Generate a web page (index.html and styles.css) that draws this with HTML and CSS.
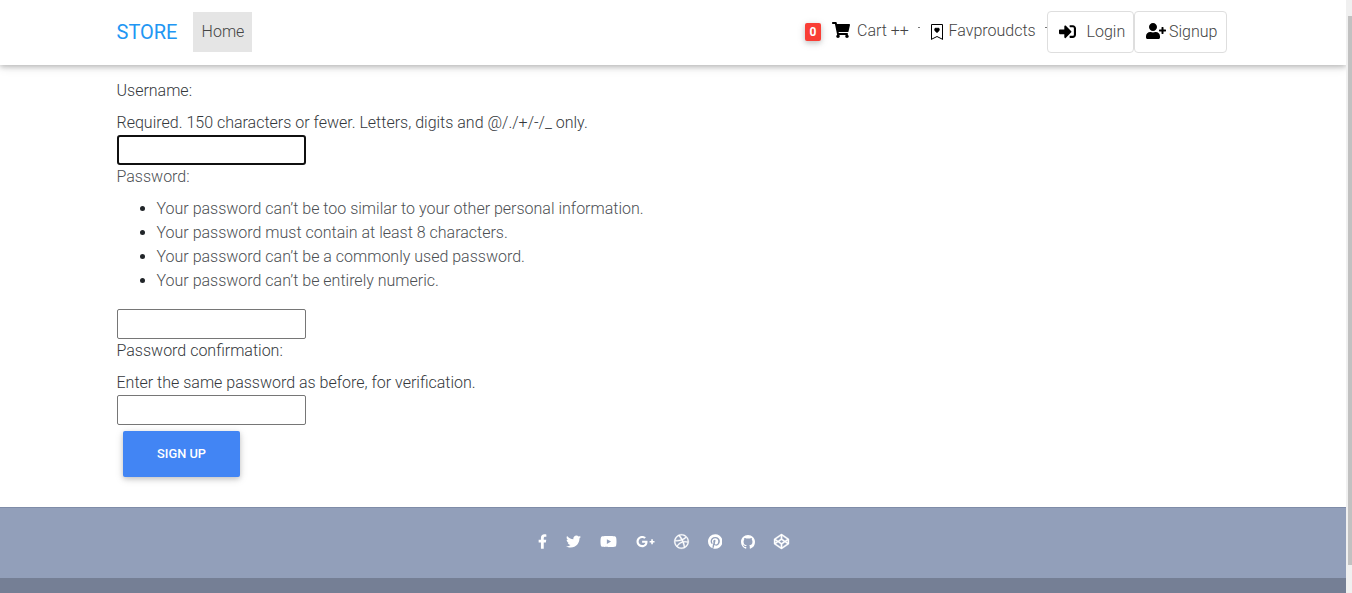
FILE: index.html
```html
<!DOCTYPE html>
<html lang="en">
<head>
<meta charset="utf-8">
<title>Store - Sign up</title>
<link rel="stylesheet" href="styles.css">
</head>
<body>
<div class="window">
<div class="page">
  <nav class="navbar">
    <a class="brand">STORE</a>
    <a class="home">Home</a>
    <div class="nav-right">
      <span class="badge">0</span>
      <svg class="cart" viewBox="0 0 576 512"><path d="M528.12 301.319l47.273-208C578.806 78.301 567.391 64 551.99 64H159.208l-9.166-44.81C147.758 8.021 137.93 0 126.529 0H24C10.745 0 0 10.745 0 24v16c0 13.255 10.745 24 24 24h69.883l70.248 343.435C147.325 417.1 136 435.222 136 456c0 30.928 25.072 56 56 56s56-25.072 56-56c0-15.674-6.447-29.835-16.824-40h209.647C430.447 426.165 424 440.326 424 456c0 30.928 25.072 56 56 56s56-25.072 56-56c0-22.172-12.888-41.332-31.579-50.405l5.517-24.276c3.413-15.018-8.002-29.319-23.403-29.319H218.117l-6.545-32h293.145c11.206 0 20.92-7.754 23.403-18.681z"/></svg>
      <a class="link cart-link">Cart ++</a>
      <i class="tick"></i>
      <svg class="bookmark" viewBox="0 0 16 16"><path fill-rule="evenodd" d="M2 1a1 1 0 0 1 1-1h10a1 1 0 0 1 1 1v15l-6-3-6 3zM3 1v13.4l5-2.5 5 2.5V1z"/><path class="heart" d="M8 4.41c1.387-1.425 4.854 1.07 0 4.277C3.146 5.48 6.613 2.986 8 4.412z"/></svg>
      <a class="link fav-link">Favproudcts</a>
      <i class="tick"></i>
      <a class="outlined login"><svg class="signin" viewBox="0 0 512 512"><path d="M416 448h-84c-6.6 0-12-5.4-12-12v-40c0-6.6 5.4-12 12-12h84c17.7 0 32-14.3 32-32V160c0-17.7-14.3-32-32-32h-84c-6.6 0-12-5.4-12-12V76c0-6.6 5.4-12 12-12h84c53 0 96 43 96 96v192c0 53-43 96-96 96zm-47-201L201 79c-15-15-41-4.5-41 17v96H24c-13.3 0-24 10.7-24 24v96c0 13.3 10.7 24 24 24h136v96c0 21.5 26 32 41 17l168-168c9.3-9.4 9.3-24.6 0-34z"/></svg><span>Login</span></a>
      <a class="outlined signup"><svg class="adduser" viewBox="0 0 640 512"><path d="M624 208h-64v-64c0-8.800-7.200-16-16-16h-32c-8.800 0-16 7.200-16 16v64h-64c-8.800 0-16 7.200-16 16v32c0 8.800 7.200 16 16 16h64v64c0 8.800 7.200 16 16 16h32c8.800 0 16-7.200 16-16v-64h64c8.800 0 16-7.200 16-16v-32c0-8.800-7.200-16-16-16zm-400 48c70.700 0 128-57.300 128-128S294.700 0 224 0 96 57.300 96 128s57.300 128 128 128zm89.600 32h-16.700c-22.200 10.200-46.900 16-72.900 16s-50.600-5.800-72.900-16h-16.700C60.200 288 0 348.200 0 422.400V464c0 26.500 21.500 48 48 48h352c26.500 0 48-21.500 48-48v-41.600c0-74.200-60.200-134.400-134.400-134.400z"/></svg><span>Signup</span></a>
    </div>
  </nav>

  <form class="form">
    <label class="label">Username:</label>
    <div class="help">Required. 150 characters or fewer. Letters, digits and @/./+/-/_ only.</div>
    <input class="field focused" type="text">
    <label class="label soft">Password:</label>
    <ul class="rules">
      <li>Your password can’t be too similar to your other personal information.</li>
      <li>Your password must contain at least 8 characters.</li>
      <li>Your password can’t be a commonly used password.</li>
      <li>Your password can’t be entirely numeric.</li>
    </ul>
    <input class="field" type="password">
    <label class="label">Password confirmation:</label>
    <div class="help">Enter the same password as before, for verification.</div>
    <input class="field" type="password">
    <button class="submit" type="button">SIGN UP</button>
  </form>

  <footer class="footer">
    <div class="social">
      <svg class="s-fb" viewBox="0 0 320 512"><path d="M279.14 288l14.22-92.66h-88.91v-60.13c0-25.35 12.42-50.06 52.24-50.06h40.42V6.26S260.43 0 225.36 0c-73.22 0-121.08 44.38-121.08 124.72v70.62H22.89V288h81.39v224h100.17V288z"/></svg>
      <svg class="s-std" viewBox="0 0 512 512"><path d="M459.37 151.716c.325 4.548.325 9.097.325 13.645 0 138.72-105.583 298.558-298.558 298.558-59.452 0-114.68-17.219-161.137-47.106 8.447.974 16.568 1.299 25.34 1.299 49.055 0 94.213-16.568 130.274-44.832-46.132-.975-84.792-31.188-98.112-72.772 6.498.974 12.995 1.624 19.818 1.624 9.421 0 18.843-1.3 27.614-3.573-48.081-9.747-84.143-51.98-84.143-102.985v-1.299c13.969 7.797 30.214 12.67 47.431 13.319-28.264-18.843-46.781-51.005-46.781-87.391 0-19.492 5.197-37.36 14.294-52.954 51.655 63.675 129.3 105.258 216.365 109.807-1.624-7.797-2.599-15.918-2.599-24.04 0-57.828 46.782-104.934 104.934-104.934 30.213 0 57.502 12.67 76.67 33.137 23.715-4.548 46.456-13.32 66.599-25.34-7.798 24.366-24.366 44.833-46.132 57.827 21.117-2.273 41.584-8.122 60.426-16.243-14.292 20.791-32.161 39.308-52.628 54.253z"/></svg>
      <svg class="s-yt" viewBox="0 0 576 512"><path d="M549.655 124.083c-6.281-23.65-24.787-42.276-48.284-48.597C458.781 64 288 64 288 64S117.22 64 74.629 75.486c-23.497 6.322-42.003 24.947-48.284 48.597-11.412 42.867-11.412 132.305-11.412 132.305s0 89.438 11.412 132.305c6.281 23.65 24.787 41.5 48.284 47.821C117.22 448 288 448 288 448s170.78 0 213.371-11.486c23.497-6.321 42.003-24.171 48.284-47.821 11.412-42.867 11.412-132.305 11.412-132.305s0-89.438-11.412-132.305zm-317.51 213.508V175.185l142.739 81.205-142.739 81.201z"/></svg>
      <svg class="s-gp" viewBox="0 0 640 512"><path d="M386.061 228.496c1.834 9.692 3.143 19.384 3.143 31.956C389.204 370.205 315.599 448 204.8 448c-106.084 0-192-85.915-192-192s85.916-192 192-192c51.864 0 95.083 18.859 128.611 50.292l-52.126 50.03c-14.145-13.621-39.028-29.599-76.485-29.599-65.484 0-118.92 54.221-118.92 121.277 0 67.056 53.436 121.277 118.92 121.277 75.961 0 104.513-54.745 108.965-82.773H204.8v-66.009h181.261zm185.406 6.437V179.2h-56.001v55.733h-55.733v56.001h55.733v55.733h56.001v-55.733H627.2v-56.001h-55.733z"/></svg>
      <svg class="s-std bold" viewBox="0 0 512 512"><path d="M256 8C119.252 8 8 119.252 8 256s111.252 248 248 248 248-111.252 248-248S392.748 8 256 8zm163.97 114.366c29.503 36.046 47.369 81.957 47.835 131.955-6.984-1.477-77.018-15.682-147.502-6.818-5.752-14.041-11.181-26.393-18.617-41.614 78.321-31.977 113.818-77.482 118.284-83.523zM396.421 97.87c-3.81 5.427-35.697 48.286-111.021 76.519-34.712-63.776-73.185-116.168-79.04-124.008 67.176-16.193 137.966 1.27 190.061 47.489zm-230.48-33.25c5.585 7.659 43.438 60.116 78.537 122.509-99.087 26.313-186.36 25.934-195.834 25.809C62.38 147.205 106.678 92.573 165.941 64.62zM44.17 256.323c0-2.166.043-4.322.108-6.473 9.268.19 111.92 1.513 217.706-30.146 6.064 11.868 11.857 23.915 17.174 35.949-76.599 21.575-146.194 83.527-180.531 142.306C64.794 360.405 44.17 310.73 44.17 256.323zm81.807 167.113c22.127-45.233 82.178-103.622 167.579-132.756 29.74 77.283 42.039 142.053 45.189 160.638-68.112 29.013-150.015 21.053-212.768-27.882zm248.38 8.489c-2.171-12.886-13.446-74.897-41.152-151.033 66.38-10.626 124.7 6.768 131.947 9.055-9.442 58.941-43.273 109.844-90.795 141.978z"/></svg>
      <svg class="s-pin" viewBox="0 0 496 512"><path d="M496 256c0 137-111 248-248 248-25.6 0-50.2-3.9-73.4-11.1 10.1-16.5 25.2-43.5 30.8-65 3-11.6 15.4-59 15.4-59 8.1 15.4 31.7 28.5 56.8 28.5 74.8 0 128.7-68.8 128.7-154.3 0-81.9-66.9-143.2-152.9-143.2-107 0-163.9 71.8-163.9 150.1 0 36.4 19.4 81.7 50.3 96.1 4.7 2.2 7.2 1.2 8.3-3.3.8-3.4 5-20.3 6.9-28.1.6-2.5.3-4.7-1.7-7.1-10.1-12.5-18.3-35.3-18.3-56.6 0-54.7 41.4-107.6 112-107.6 60.9 0 103.6 41.5 103.6 100.9 0 67.1-33.9 113.6-78 113.6-24.3 0-42.6-20.1-36.7-44.8 7-29.5 20.5-61.3 20.5-82.6 0-19-10.2-34.9-31.4-34.9-24.9 0-44.9 25.7-44.9 60.2 0 22 7.4 36.8 7.4 36.8s-24.5 103.800-29 123.200c-5 21.400-3 51.600-.9 71.200C65.400 450.900 0 361.100 0 256 0 119 111 8 248 8s248 111 248 248z"/></svg>
      <svg class="s-git" viewBox="0 0 16 16"><path d="M8 0C3.58 0 0 3.58 0 8c0 3.54 2.29 6.53 5.47 7.59.4.07.55-.17.55-.38 0-.19-.01-.82-.01-1.49-2.01.37-2.53-.49-2.69-.94-.09-.23-.48-.94-.82-1.13-.28-.15-.68-.52-.01-.53.63-.01 1.08.58 1.23.82.72 1.21 1.87.87 2.33.66.07-.52.28-.87.51-1.07-1.78-.2-3.64-.89-3.64-3.95 0-.87.31-1.59.82-2.15-.08-.2-.36-1.02.08-2.12 0 0 .67-.21 2.2.82.64-.18 1.32-.27 2-.27s1.36.09 2 .27c1.53-1.04 2.2-.82 2.2-.82.44 1.1.16 1.92.08 2.12.51.56.82 1.27.82 2.15 0 3.07-1.87 3.75-3.65 3.95.29.25.54.73.54 1.48 0 1.07-.01 1.93-.01 2.2 0 .21.15.46.55.38A8.01 8.01 0 0016 8c0-4.42-3.58-8-8-8z"/></svg>
      <svg class="s-std bold" viewBox="0 0 512 512"><path d="M502.285 159.704l-234-156c-7.987-4.915-16.568-4.945-24.571 0l-234 156C3.714 163.703 0 170.847 0 177.989v155.999c0 7.143 3.714 14.286 9.715 18.286l234 156.022c7.987 4.915 16.568 4.945 24.571 0l234-156.022c6-3.999 9.715-11.143 9.715-18.286V177.989c-.001-7.142-3.715-14.286-9.716-18.285zM278 63.131l172.286 114.858-76.857 51.429L278 165.703V63.131zm-44 0v102.572l-95.429 63.715-76.857-51.429L234 63.131zM44 219.132l55.143 36.857L44 292.847v-73.715zm190 229.715L61.714 333.989l76.857-51.429L234 346.275v102.572zm22-140.858l-77.715-52 77.715-52 77.715 52-77.715 52zm22 140.858V346.275l95.429-63.715 76.857 51.429L278 448.847zm190-156l-55.143-36.857L468 219.132v73.715z"/></svg>
    </div>
    <div class="copyright"></div>
  </footer>
</div>
<div class="scrollbar"><div class="thumb"></div></div>
</div>
</body>
</html>
```
FILE: styles.css
```css
* { box-sizing: border-box; }
body {
  margin: 0;
  overflow: hidden;
  background: #fff;
  color: #34383c;
  font: 300 16px/24px Roboto, "Liberation Sans", sans-serif;
}
.window { display: flex; height: 593px; }
.page { display: flex; flex-direction: column; width: 1346px; }
.scrollbar { width: 6px; padding: 16px 0 0 2px; background: #f0f0f0; }
.thumb { height: 549px; background: #c1c1c1; }

.navbar {
  display: flex;
  align-items: center;
  height: 65px;
  flex: none;
  padding: 0 119px 2px 116.5px;
  color: #444;
  box-shadow: 0 2px 5px rgba(0, 0, 0, .2), 0 2px 10px rgba(0, 0, 0, .12);
}
.brand { width: 76.5px; color: #2196f3; font-size: 20px; font-weight: 400; }
.home {
  height: 40px;
  width: 59px;
  padding-left: 1px;
  line-height: 40px;
  text-align: center;
  background: #e5e5e5;
}
.nav-right { display: flex; align-items: center; margin-left: auto; }
.badge {
  width: 16px;
  height: 18px;
  border-radius: 2px;
  background: #f93e35;
  color: #fff;
  font-size: 12px;
  font-weight: 700;
  line-height: 18px;
  text-align: center;
  box-shadow: 0 2px 5px rgba(0, 0, 0, .16), 0 2px 10px rgba(0, 0, 0, .12);
}
.cart { width: 18px; height: 16px; margin: 0 7px 3px 11px; }
.link { padding-bottom: 1px; white-space: nowrap; }
.cart-link { width: 61px; }
.fav-link { width: 96.5px; }
.tick { width: 2px; height: 1px; margin-bottom: 8px; background: #777; }
.bookmark { width: 16px; height: 16px; margin: 0 3.5px 0 9px; }
.heart { stroke: #000; stroke-width: .5; }
.outlined {
  display: flex;
  align-items: center;
  height: 42px;
  border: 1px solid #dedede;
  border-radius: 4px;
}
.login { width: 87px; padding-left: 11px; gap: 10.5px; }
.signup { width: 93px; padding-left: 11px; gap: 3px; }
.signin { width: 17px; height: 17px; }
.adduser { width: 20px; height: 16px; margin-bottom: 2px; }

.form {
  display: flex;
  flex-direction: column;
  align-items: flex-start;
  flex: none;
  height: 442px;
  padding: 14px 0 0 116.5px;
}
.label { margin-bottom: 8px; }
.soft { color: #4c4f53; }
.field {
  width: 189px;
  height: 30px;
  border: 1px solid #767676;
  border-radius: 2px;
  background: #fff;
}
.focused { border: 2px solid #101010; border-radius: 3px; outline: none; }
.rules { margin: 0 0 16px; padding-left: 40px; color: #4c4f53; }
.rules li::marker { color: #212529; }
.submit {
  width: 117px;
  height: 46px;
  margin: 6px;
  border: 0;
  border-radius: 2px;
  background: #4285f4;
  color: #fff;
  font: 500 12.8px/46px Roboto, "Liberation Sans", sans-serif;
  padding: 0 0 0 1px;
  box-shadow: 0 2px 5px rgba(0, 0, 0, .16), 0 2px 10px rgba(0, 0, 0, .12);
}

.footer { flex: 1; display: flex; flex-direction: column; background: #929fba; border-top: 1px solid #7f8ca8; }
.social {
  display: flex;
  align-items: center;
  flex: none;
  height: 70px;
  padding: 0 0 3px 538px;
  fill: #fff;
}
.s-fb { width: 9px; height: 15px; margin-right: 19px; }
.s-std { width: 15px; height: 15px; margin-right: 19px; }
.s-yt { width: 17px; height: 15px; margin-right: 19px; }
.s-gp { width: 19px; height: 15px; margin-right: 18.5px; }
.s-pin { width: 14.500px; height: 15px; margin-right: 18.5px; }
.s-git { width: 14px; height: 14px; margin-right: 19px; }
.bold { stroke: #fff; stroke-width: 12; overflow: visible; }
.copyright { flex: 1; background: #757f95; }
```
